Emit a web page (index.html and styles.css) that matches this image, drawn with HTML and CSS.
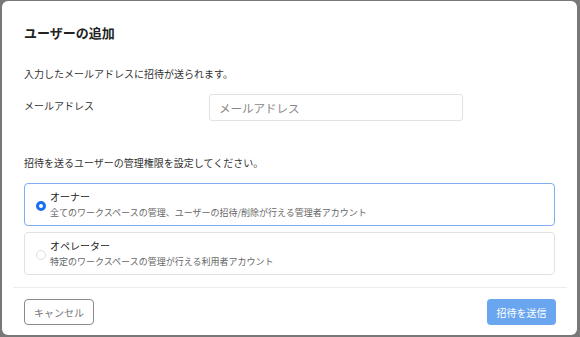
FILE: index.html
```html
<!DOCTYPE html>
<html lang="ja">
<head>
    <meta charset="UTF-8">
    <meta name="viewport" content="width=device-width, initial-scale=1.0">
    <title>ユーザーの追加</title>
    <link rel="stylesheet" href="styles.css">
</head>
<body>
<div class="overlay">
    <div class="modal" role="dialog" aria-labelledby="modalTitle">
        <div class="modal-body">
            <h2 id="modalTitle" class="modal-title">ユーザーの追加</h2>
            <p class="lead">入力したメールアドレスに招待が送られます。</p>

            <div class="field-row">
                <label for="email" class="field-label">メールアドレス</label>
                <input type="email" id="email" class="field-input" placeholder="メールアドレス">
            </div>

            <p class="lead role-lead">招待を送るユーザーの管理権限を設定してください。</p>

            <label class="role-option selected">
                <input type="radio" name="role" value="owner" checked>
                <span class="radio-mark"></span>
                <span class="role-text">
                    <span class="role-name">オーナー</span>
                    <span class="role-desc">全てのワークスペースの管理、ユーザーの招待/削除が行える管理者アカウント</span>
                </span>
            </label>
            <label class="role-option">
                <input type="radio" name="role" value="operator">
                <span class="radio-mark"></span>
                <span class="role-text">
                    <span class="role-name">オペレーター</span>
                    <span class="role-desc">特定のワークスペースの管理が行える利用者アカウント</span>
                </span>
            </label>
        </div>
        <div class="modal-footer">
            <button class="btn btn-cancel">キャンセル</button>
            <button class="btn btn-submit" disabled>招待を送信</button>
        </div>
    </div>
</div>
</body>
</html>
```

FILE: styles.css
```css
body {
    margin: 0;
    font-family: "Noto Sans CJK JP", "Noto Sans", sans-serif;
    background-color: #787878;
    color: #333;
}

.overlay {
    height: 337px;
    padding: 1px 3px 2px 2px;
    box-sizing: border-box;
}

.modal {
    height: 334px;
    background: #fff;
    border-radius: 6px;
    display: flex;
    flex-direction: column;
    box-sizing: border-box;
}

.modal-body {
    padding: 22px 22px 0 22px;
}

.modal-title {
    margin: 0;
    font-size: 13px;
    line-height: 20px;
    font-weight: bold;
    color: #222;
}

.lead {
    margin: 22px 0 0;
    font-size: 10px;
    line-height: 18px;
}

.field-row {
    display: flex;
    align-items: center;
    margin-top: 11px;
}

.field-label {
    width: 185px;
    font-size: 10px;
    line-height: 18px;
    margin-top: -3px;
}

.field-input {
    width: 254px;
    height: 27px;
    box-sizing: border-box;
    border: 1px solid #e2e2e2;
    border-radius: 3px;
    padding: 0 9px;
    font-family: inherit;
    font-size: 11.5px;
    color: #333;
}

.field-input::placeholder {
    color: #888;
}

.role-lead {
    margin-top: 33px;
}

.role-option {
    display: flex;
    align-items: center;
    height: 43px;
    box-sizing: border-box;
    border: 1px solid #e2e2e2;
    border-radius: 4px;
    padding: 0 0 0 11px;
    margin-top: 6px;
    cursor: pointer;
}

.role-lead + .role-option {
    margin-top: 11px;
}

.role-option.selected {
    border-color: #7eadf2;
}

.role-option input {
    display: none;
}

.radio-mark {
    width: 10px;
    height: 10px;
    box-sizing: border-box;
    border: 1px solid #e0e0e0;
    border-radius: 50%;
    margin-top: 2px;
    margin-right: 4px;
    flex-shrink: 0;
}

.selected .radio-mark {
    border: 3px solid #1a6ff0;
}

.role-text {
    display: flex;
    flex-direction: column;
}

.role-name {
    font-size: 10px;
    line-height: 16px;
    color: #222;
}

.role-desc {
    font-size: 9px;
    line-height: 15px;
    color: #666;
}

.modal-footer {
    margin: auto 10px 0 11px;
    border-top: 1px solid #ececec;
    padding: 11px 11px 10px;
    display: flex;
    justify-content: space-between;
}

.btn {
    height: 26px;
    padding: 0;
    border-radius: 4px;
    font-family: inherit;
    font-size: 10px;
    white-space: nowrap;
}

.btn-cancel {
    width: 70px;
    background: #fff;
    border: 1px solid #8a8a8a;
    color: #777;
}

.btn-submit {
    width: 69px;
    background: #6aa6ef;
    border: none;
    color: #fff;
}
```
